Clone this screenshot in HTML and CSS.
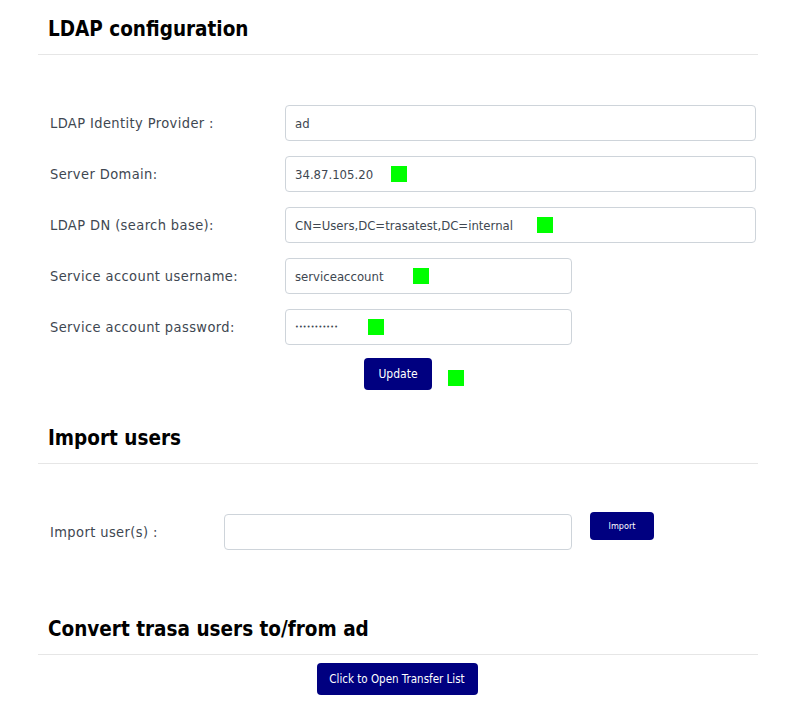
FILE: index.html
```html
<!DOCTYPE html>
<html lang="en">
<head>
  <meta charset="UTF-8">
  <title>LDAP configuration</title>
  <link rel="stylesheet" href="styles.css">
</head>
<body>
  <div class="page">
    <h2 class="heading">LDAP configuration</h2>
    <form class="ldap-form">
      <div class="form-row">
        <label class="form-label">LDAP Identity Provider :</label>
        <div class="field wide"><input class="form-input" type="text" value="ad"></div>
      </div>
      <div class="form-row">
        <label class="form-label">Server Domain:</label>
        <div class="field wide">
          <input class="form-input" type="text" value="34.87.105.20">
          <span class="marker" style="left: 106px"></span>
        </div>
      </div>
      <div class="form-row">
        <label class="form-label">LDAP DN (search base):</label>
        <div class="field wide">
          <input class="form-input" type="text" value="CN=Users,DC=trasatest,DC=internal">
          <span class="marker" style="left: 252px"></span>
        </div>
      </div>
      <div class="form-row">
        <label class="form-label">Service account username:</label>
        <div class="field narrow">
          <input class="form-input" type="text" value="serviceaccount">
          <span class="marker" style="left: 128px"></span>
        </div>
      </div>
      <div class="form-row">
        <label class="form-label">Service account password:</label>
        <div class="field narrow">
          <input class="form-input password" type="password" value="passwordxyz">
          <span class="marker" style="left: 83px"></span>
        </div>
      </div>
      <div class="update-row">
        <button type="button" class="btn btn-update">Update</button>
        <span class="marker-inline"></span>
      </div>
    </form>

    <h2 class="heading heading-import">Import users</h2>
    <div class="import-row">
      <label class="form-label import-label">Import user(s) :</label>
      <div class="field import-field"><input class="form-input" type="text"></div>
      <button type="button" class="btn btn-import">Import</button>
    </div>

    <h2 class="heading heading-convert">Convert trasa users to/from ad</h2>
    <div class="transfer-row">
      <button type="button" class="btn btn-transfer">Click to Open Transfer List</button>
    </div>
  </div>
</body>
</html>
```

FILE: styles.css
```css
body {
  margin: 0;
  padding: 0;
  background: #fff;
  font-family: "DejaVu Sans Condensed", "DejaVu Sans", sans-serif;
}

.page {
  width: 720px;
  margin-left: 38px;
}

.heading {
  margin: 0;
  padding: 16px 10px 12px;
  font-size: 20.5px;
  font-weight: bold;
  line-height: 26px;
  color: #000;
  border-bottom: 1px solid #e6e6e6;
}

.ldap-form {
  padding-top: 50px;
}

.form-row {
  display: flex;
  align-items: center;
  height: 36px;
  margin-bottom: 15px;
}

.form-label {
  width: 235px;
  padding-left: 12px;
  font-size: 14.5px;
  color: #3e4751;
  letter-spacing: 0.4px;
}

.field {
  position: relative;
  height: 36px;
}

.wide {
  width: 471px;
}

.narrow {
  width: 287px;
}

.form-input {
  box-sizing: border-box;
  width: 100%;
  height: 36px;
  padding: 0 9px;
  border: 1px solid #ced4da;
  border-radius: 4px;
  font-family: inherit;
  font-size: 13px;
  color: #3e4751;
  background: #fff;
}

.form-input.password {
  font-size: 7px;
  letter-spacing: 0.2px;
}

.marker {
  position: absolute;
  top: 10px;
  width: 16px;
  height: 16px;
  background: #00ff00;
}

.marker-inline {
  display: inline-block;
  width: 16px;
  height: 16px;
  margin-left: 16px;
  margin-top: 12px;
  background: #00ff00;
}

.btn {
  border: none;
  border-radius: 4px;
  background: #000080;
  color: #fff;
  font-family: inherit;
  cursor: pointer;
}

.update-row {
  display: flex;
  align-items: flex-start;
  margin-top: -2px;
  padding-left: 326px;
}

.btn-update {
  width: 68px;
  height: 32px;
  font-size: 12px;
}

.heading-import {
  margin-top: 19px;
}

.import-row {
  display: flex;
  align-items: flex-start;
  padding-top: 50px;
}

.import-label {
  width: 174px;
  line-height: 36px;
}

.import-field {
  width: 348px;
}

.btn-import {
  width: 64px;
  height: 28px;
  margin-left: 18px;
  margin-top: -2px;
  font-size: 9px;
}

.heading-convert {
  margin-top: 50px;
}

.transfer-row {
  display: flex;
  justify-content: center;
  padding-top: 8px;
  padding-right: 2px;
}

.btn-transfer {
  width: 161px;
  height: 32px;
  font-size: 11.5px;
}
```
